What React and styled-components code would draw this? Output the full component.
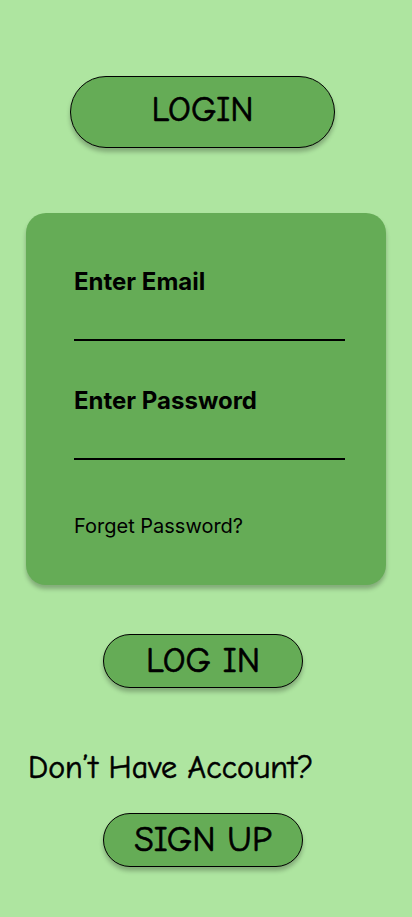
import React from 'react';
import styled, { createGlobalStyle } from 'styled-components';

const GlobalStyle = createGlobalStyle`
  html, body {
    margin: 0;
    padding: 0;
    background: #aee5a0;
  }
  body {
    font-family: Inter, "Noto Sans", sans-serif;
    color: #000;
  }
`;

const comic = `"Comic Sans MS", "Comic Neue", "DejaVu Sans", sans-serif`;

const Page = styled.div`
  min-height: 917px;
  background: #aee5a0;
  display: flex;
  flex-direction: column;
  align-items: flex-start;
  padding-top: 76px;
  box-sizing: border-box;
`;

const PillButton = styled.button`
  display: flex;
  align-items: center;
  justify-content: center;
  width: ${(p) => p.$width}px;
  height: ${(p) => p.$height}px;
  margin-left: ${(p) => p.$left}px;
  margin-top: ${(p) => p.$top || 0}px;
  padding: 0 0 ${(p) => p.$lift || 0}px;
  background: #65ac56;
  border: 1px solid #000;
  border-radius: 999px;
  box-shadow: 0 4px 4px rgba(0, 0, 0, 0.25);
  font-family: ${comic};
  font-weight: 400;
  -webkit-text-stroke: 0.7px #000;
  font-size: ${(p) => p.$size}px;
  line-height: 1;
  color: #000;
  box-sizing: border-box;
  cursor: pointer;
`;

const Card = styled.div`
  margin: 65px 0 0 26px;
  width: 360px;
  height: 372px;
  box-sizing: border-box;
  padding: 57px 0 0 48px;
  background: #65ac56;
  border-radius: 20px;
  box-shadow: 0 4px 4px rgba(0, 0, 0, 0.25);
  display: flex;
  flex-direction: column;
`;

const Label = styled.label`
  font-size: 24px;
  line-height: 24px;
  font-weight: 700;
  margin-top: ${(p) => p.$top || 0}px;
`;

const Underline = styled.div`
  width: 271px;
  height: 2px;
  background: #000;
  margin-top: 45px;
`;

const Forget = styled.a`
  margin-top: 56px;
  font-size: 20px;
  line-height: 20px;
  font-weight: 400;
  color: #000;
  text-decoration: none;
`;

const Prompt = styled.p`
  margin: 64px 0 0 28px;
  font-family: ${comic};
  font-weight: 400;
  -webkit-text-stroke: 0.6px #000;
  font-size: 32px;
  line-height: 32px;
`;

export default function App() {
  return (
    <>
      <GlobalStyle />
      <Page>
        <PillButton $width={265} $height={72} $left={70} $size={35.5} $lift={5}>
          LOGIN
        </PillButton>
        <Card>
          <Label>Enter Email</Label>
          <Underline />
          <Label $top={48}>Enter Password</Label>
          <Underline />
          <Forget>Forget Password?</Forget>
        </Card>
        <PillButton $width={200} $height={54} $left={103} $top={49} $size={35.5}>
          LOG IN
        </PillButton>
        <Prompt>Don’t Have Account?</Prompt>
        <PillButton $width={200} $height={54} $left={103} $top={29} $size={35.5}>
          SIGN UP
        </PillButton>
      </Page>
    </>
  );
}
